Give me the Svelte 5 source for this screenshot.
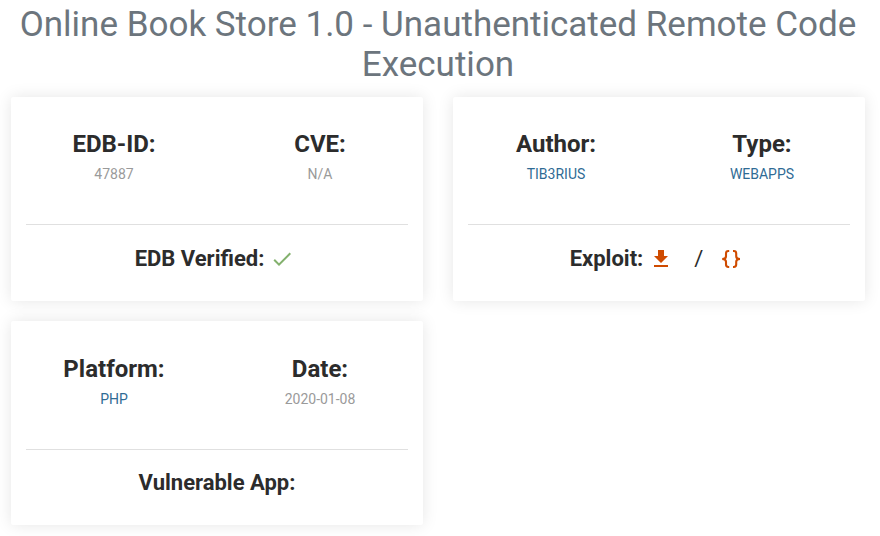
<script>
  const cards = [
    {
      stats: [
        { label: 'EDB-ID:', value: '47887' },
        { label: 'CVE:', value: 'N/A' }
      ],
      footer: 'EDB Verified:',
      kind: 'verified'
    },
    {
      stats: [
        { label: 'Author:', value: 'TIB3RIUS', link: true },
        { label: 'Type:', value: 'WEBAPPS', link: true }
      ],
      footer: 'Exploit:',
      kind: 'exploit'
    },
    {
      stats: [
        { label: 'Platform:', value: 'PHP', link: true },
        { label: 'Date:', value: '2020-01-08' }
      ],
      footer: 'Vulnerable App:',
      kind: 'app'
    }
  ];
</script>

<main>
  <h1>Online Book Store 1.0 - Unauthenticated Remote Code Execution</h1>
  <div class="cards">
    {#each cards as card}
      <section class="card {card.kind}">
        <div class="stats">
          {#each card.stats as stat}
            <div class="stat">
              <h4>{stat.label}</h4>
              <h6 class:link={stat.link}>{stat.value}</h6>
            </div>
          {/each}
        </div>
        <div class="footer">
          <span>{card.footer}</span>
          {#if card.kind === 'verified'}
            <svg class="check" viewBox="0 0 24 24"><path fill="#83b16d" d="M21 7L9 19l-5.5-5.5 1.41-1.41L9 16.17 19.59 5.59z" /></svg>
          {:else if card.kind === 'exploit'}
            <svg class="download" viewBox="0 0 24 24"><path fill="#cf4b00" d="M5 20h14v-2H5zM19 9h-4V3H9v6H5l7 7z" /></svg>
            <span class="slash">/</span>
            <svg class="braces" viewBox="0 0 24 24"><path fill="none" stroke="#cf4b00" stroke-width="2.1" d="M10.2 4H9.4C7.7 4 7 4.8 7 6.4v2.8c0 1.8-1 2.8-3.8 2.8C6 12 7 13 7 14.8v2.8C7 19.2 7.7 20 9.4 20h.8M14 4h.8c1.7 0 2.4.8 2.4 2.4v2.8c0 1.8 1 2.8 3.8 2.8-2.8 0-3.8 1-3.8 2.8v2.8c0 1.6-.7 2.4-2.4 2.4H14" /></svg>
          {/if}
        </div>
      </section>
    {/each}
  </div>
</main>

<style>
  :global(body) { background: #fff; overflow: hidden; }
  main {
    box-sizing: border-box;
    height: 536px;
    padding: 5px 15px 0 11px;
    overflow: hidden;
    font-family: Roboto, sans-serif;
    color: #2c2c2c;
  }
  h1, h4, h6 { margin: 0; }
  h1 {
    font-size: 35px;
    line-height: 40px;
    font-weight: 400;
    color: #6c757d;
    text-align: center;
  }
  .cards {
    display: grid;
    grid-template-columns: 412px 412px;
    gap: 20px 30px;
    margin-top: 12px;
  }
  .card {
    box-sizing: border-box;
    height: 204px;
    padding: 0 15px;
    background: #fff;
    border-radius: 2px;
    box-shadow: 0 0 16px rgba(0, 0, 0, 0.1);
    text-align: center;
  }
  .stats {
    display: flex;
    justify-content: center;
    box-sizing: border-box;
    height: 128px;
    padding-top: 32px;
    border-bottom: 1px solid #e0e0e0;
  }
  .stat { width: 206px; flex: none; }
  h4 { font-size: 24px; line-height: 30px; font-weight: 700; }
  h6 { font-size: 14px; line-height: 20px; margin-top: 5px; font-weight: 400; color: #9a9a9a; }
  h6.link { color: #2f6b95; }
  .footer {
    display: flex;
    justify-content: center;
    align-items: center;
    height: 66px;
    font-size: 22px;
    font-weight: 700;
  }
  .app .stats { height: 129px; padding-top: 33px; }
  .app .footer { height: 64px; }
  svg { width: 24px; height: 24px; flex: none; margin-top: 2px; }
  .verified .footer { padding-right: 5px; }
  .exploit .footer { padding-right: 5px; }
  .check { margin-left: 6px; }
  .download { margin-left: 6px; }
  .slash { margin: 0 16px 0 21px; font-weight: 400; }
</style>
